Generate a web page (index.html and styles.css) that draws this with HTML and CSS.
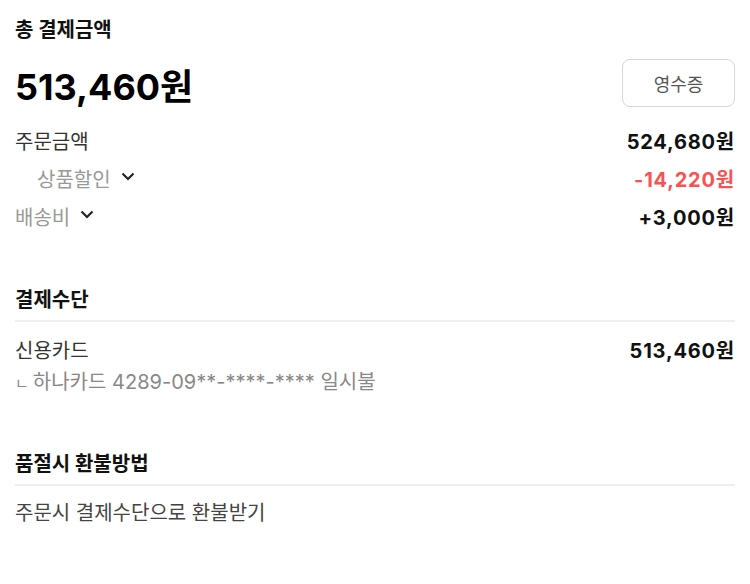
FILE: index.html
```html
<!DOCTYPE html>
<html lang="ko">

<head>
    <meta charset="UTF-8">
    <meta name="viewport" content="width=device-width, initial-scale=1.0">
    <title>결제정보</title>
    <link rel="stylesheet" href="styles.css">
</head>

<body>
    <div class="box-all">
        <div class="summary">
            <h3 class="title">총 결제금액</h3>
            <div class="total-row">
                <span class="total">513,460원</span>
                <button type="button" class="receipt">영수증</button>
            </div>
            <div class="row">
                <span class="label">주문금액</span>
                <span class="price">524,680원</span>
            </div>
            <div class="row">
                <span class="label gray indent">상품할인
                    <svg class="chev" viewBox="0 0 14 9" width="14" height="9"><path d="M1.5 1.5 7 7l5.5-5.5" /></svg>
                </span>
                <span class="price red">-14,220원</span>
            </div>
            <div class="row">
                <span class="label gray">배송비
                    <svg class="chev" viewBox="0 0 14 9" width="14" height="9"><path d="M1.5 1.5 7 7l5.5-5.5" /></svg>
                </span>
                <span class="price">+3,000원</span>
            </div>
        </div>

        <div class="section">
            <h3 class="title line">결제수단</h3>
            <div class="row">
                <span class="label">신용카드</span>
                <span class="price">513,460원</span>
            </div>
            <p class="card"><span class="mark">ㄴ</span>하나카드 <span class="num">4289-09**-****-****</span> 일시불</p>
        </div>

        <div class="section">
            <h3 class="title line">품절시 환불방법</h3>
            <p class="text">주문시 결제수단으로 환불받기</p>
        </div>
    </div>
</body>

</html>
```

FILE: styles.css
```css
* {
    box-sizing: border-box;
}

body {
    padding: 0;
    margin: 0;
    font-family: "Inter", "Noto Sans CJK KR", sans-serif;
    color: #222;
    background: #fff;
}

.box-all {
    padding: 0 15px;
}

h3,
p {
    margin: 0;
}

.title {
    font-size: 20px;
    font-weight: bold;
    color: #111;
    line-height: 26px;
    padding-top: 17px;
}

.total-row {
    display: flex;
    justify-content: space-between;
    align-items: center;
    height: 48px;
    margin-top: 16px;
    margin-bottom: 14px;
}

.total {
    font-size: 36px;
    font-weight: bold;
    color: #000;
    line-height: 40px;
    margin-top: 8px;
}

.receipt {
    width: 113px;
    height: 48px;
    border: 1px solid #d6d6d6;
    border-radius: 8px;
    background: #fff;
    font-family: inherit;
    font-size: 18px;
    color: #555;
}

.row {
    display: flex;
    justify-content: space-between;
    align-items: center;
    height: 38px;
    font-size: 20px;
}

.label {
    color: #333;
    display: flex;
    align-items: center;
}

.gray {
    color: #999;
}

.indent {
    padding-left: 22px;
}

.chev {
    margin-left: 10px;
    margin-top: -3px;
    fill: none;
    stroke: #222;
    stroke-width: 2.2;
}

.price {
    font-weight: bold;
    color: #111;
    letter-spacing: 0.8px;
}

.red {
    color: #fa5252;
}

.section {
    padding-top: 52px;
}

.section .title {
    padding-top: 0;
}

.line {
    padding-bottom: 7px;
    border-bottom: 2px solid #eee;
    margin-bottom: 8px;
}

.card {
    font-size: 20px;
    color: #888;
    line-height: 28px;
    margin-bottom: 1px;
}

.mark {
    font-size: 15px;
    margin-right: 4px;
}

.text {
    font-size: 20px;
    color: #444;
    line-height: 38px;
}
```
